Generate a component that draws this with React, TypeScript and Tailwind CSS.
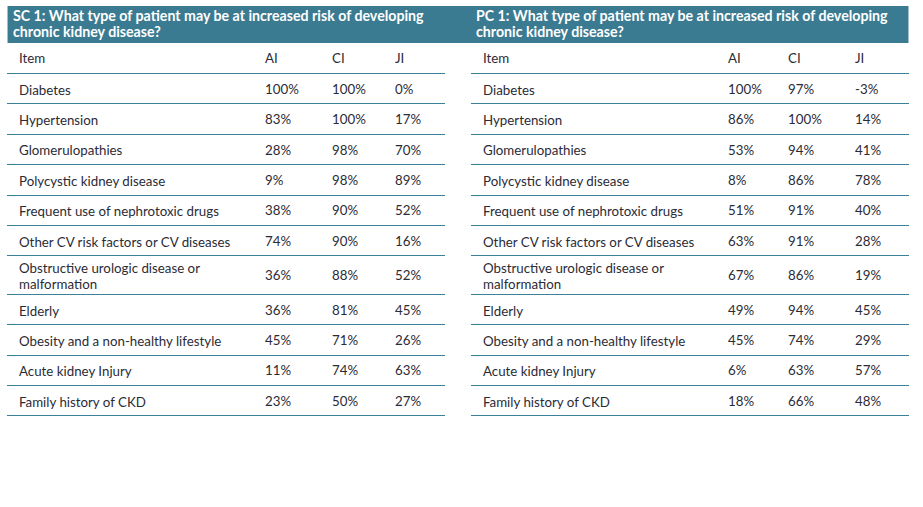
const rowsSC = [
  { item: "Diabetes", ai: "100%", ci: "100%", ji: "0%" },
  { item: "Hypertension", ai: "83%", ci: "100%", ji: "17%" },
  { item: "Glomerulopathies", ai: "28%", ci: "98%", ji: "70%" },
  { item: "Polycystic kidney disease", ai: "9%", ci: "98%", ji: "89%" },
  { item: "Frequent use of nephrotoxic drugs", ai: "38%", ci: "90%", ji: "52%" },
  { item: "Other CV risk factors or CV diseases", ai: "74%", ci: "90%", ji: "16%" },
  { item: "Obstructive urologic disease or malformation", ai: "36%", ci: "88%", ji: "52%", tall: true },
  { item: "Elderly", ai: "36%", ci: "81%", ji: "45%" },
  { item: "Obesity and a non-healthy lifestyle", ai: "45%", ci: "71%", ji: "26%" },
  { item: "Acute kidney Injury", ai: "11%", ci: "74%", ji: "63%" },
  { item: "Family history of CKD", ai: "23%", ci: "50%", ji: "27%" },
];

const rowsPC = [
  { item: "Diabetes", ai: "100%", ci: "97%", ji: "-3%" },
  { item: "Hypertension", ai: "86%", ci: "100%", ji: "14%" },
  { item: "Glomerulopathies", ai: "53%", ci: "94%", ji: "41%" },
  { item: "Polycystic kidney disease", ai: "8%", ci: "86%", ji: "78%" },
  { item: "Frequent use of nephrotoxic drugs", ai: "51%", ci: "91%", ji: "40%" },
  { item: "Other CV risk factors or CV diseases", ai: "63%", ci: "91%", ji: "28%" },
  { item: "Obstructive urologic disease or malformation", ai: "67%", ci: "86%", ji: "19%", tall: true },
  { item: "Elderly", ai: "49%", ci: "94%", ji: "45%" },
  { item: "Obesity and a non-healthy lifestyle", ai: "45%", ci: "74%", ji: "29%" },
  { item: "Acute kidney Injury", ai: "6%", ci: "63%", ji: "57%" },
  { item: "Family history of CKD", ai: "18%", ci: "66%", ji: "48%" },
];

type Row = { item: string; ai: string; ci: string; ji: string; tall?: boolean };

function Table({ rows, cols }: { rows: Row[]; cols: string }) {
  return (
    <div className="w-[438px] text-[13.3px] text-[#2b2b36]">
      <div className={`grid ${cols} h-[31px] pt-[2px] items-center border-b border-[#3a8299]`}>
        <div className="pl-3">Item</div>
        <div className="pl-3">AI</div>
        <div className="pl-3">CI</div>
        <div className="pl-3">JI</div>
      </div>
      {rows.map((r) => (
        <div
          key={r.item}
          className={`grid ${cols} items-center pt-[2px] border-b border-[#3a8299] ${r.tall ? "h-[38.5px]" : "h-[30.4px]"}`}
        >
          <div className="pl-3 pr-2 leading-[16px]">{r.item}</div>
          <div className="pl-3">{r.ai}</div>
          <div className="pl-3">{r.ci}</div>
          <div className="pl-3">{r.ji}</div>
        </div>
      ))}
    </div>
  );
}

export default function App() {
  return (
    <div className="w-[923px] h-[507px] bg-white pt-[6px] pl-[7px]" style={{ fontFamily: "Lato, 'Open Sans', sans-serif" }}>
      <div className="flex w-[902px] h-[37px] bg-[#3b7b92] border-x border-[#9fc0cc] text-white font-bold text-[14.2px] leading-[16px]">
        <div className="w-[463px] px-[5px] pt-[2px] whitespace-nowrap">
          SC 1: What type of patient may be at increased risk of developing
          <br />
          chronic kidney disease?
        </div>
        <div className="w-[437px] px-[5px] pt-[2px] whitespace-nowrap">
          PC 1: What type of patient may be at increased risk of developing
          <br />
          chronic kidney disease?
        </div>
      </div>
      <div className="flex gap-[26px]">
        <Table rows={rowsSC} cols="grid-cols-[246px_67px_63px_62px]" />
        <Table rows={rowsPC} cols="grid-cols-[245px_60px_67px_66px]" />
      </div>
    </div>
  );
}
